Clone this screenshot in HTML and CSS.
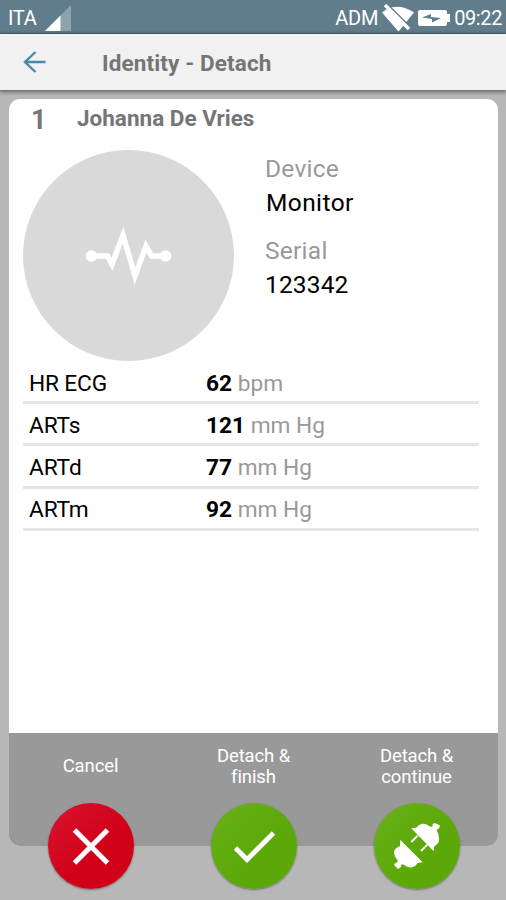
FILE: index.html
```html
<!DOCTYPE html>
<html lang="en">
<head>
<meta charset="utf-8">
<title>Identity - Detach</title>
<link rel="stylesheet" href="styles.css">
</head>
<body>
<div class="statusbar">
  <span class="carrier">ITA</span>
  <svg class="signal" viewBox="0 0 26 26"><path d="M26 0V26H0Z" fill="#8ba3ae"/><path d="M15.500 10.500V26H0Z" fill="#fff"/></svg>
  <span class="user">ADM</span>
  <svg class="wifi" viewBox="0 0 32 28"><path d="M0 8.500L5 5Q18-1 32 8.500L16.500 27.500Z" fill="#fff"/><path d="M6 1L29 24" stroke="#617d8c" stroke-width="1.800"/><path d="M3 1L27 25" stroke="#fff" stroke-width="3.400"/></svg>
  <svg class="battery" viewBox="0 0 32 16"><path d="M2 0H27Q29 0 29 2V4H32V12H29V14Q29 16 27 16H2Q0 16 0 14V2Q0 0 2 0Z" fill="#fff"/><path d="M4 7.500L13 4V7L23 8L14 12.500V9Z" fill="#617d8c"/></svg>
  <span class="clock">09:22</span>
</div>
<header class="appbar">
  <svg class="back" viewBox="0 0 24 24"><path d="M22.500 12H2M12.500 2L2 12L12.500 22" fill="none" stroke="#468aa7" stroke-width="2.400"/></svg>
  <h1 class="title">Identity - Detach</h1>
</header>
<main class="card">
  <div class="patient"><span class="bed">1</span><span class="name">Johanna De Vries</span></div>
  <section class="device">
    <div class="avatar">
      <svg viewBox="0 0 86 60"><path d="M5 30H21.500L26 38.500L37 9L49 50L60 20L65.500 30H80" fill="none" stroke="#fff" stroke-width="5.400" stroke-miterlimit="10"/><circle cx="5.500" cy="30" r="5.800" fill="#fff"/><circle cx="79.500" cy="30" r="5.800" fill="#fff"/></svg>
    </div>
    <dl class="info">
      <dt class="label">Device</dt><dd class="value">Monitor</dd>
      <dt class="label">Serial</dt><dd class="value serial">123342</dd>
    </dl>
  </section>
  <section class="vitals">
    <div class="row"><span>HR ECG</span><span class="reading"><b>62</b> bpm</span></div>
    <div class="row"><span>ARTs</span><span class="reading"><b>121</b> mm Hg</span></div>
    <div class="row"><span>ARTd</span><span class="reading"><b>77</b> mm Hg</span></div>
    <div class="row"><span>ARTm</span><span class="reading"><b>92</b> mm Hg</span></div>
  </section>
  <footer class="actions">
    <div class="action"><span class="caption">Cancel</span>
      <button class="round red" aria-label="Cancel"><svg viewBox="0 0 86 86"><path d="M26.500 27L59.500 60M59.500 27L26.500 60" stroke="#fff" stroke-width="5"/></svg></button></div>
    <div class="action"><span class="caption">Detach &amp;<br>finish</span>
      <button class="round green" aria-label="Detach and finish"><svg viewBox="0 0 86 86"><path d="M24.500 45L36 56.500L62.500 30" fill="none" stroke="#fff" stroke-width="4.800"/></svg></button></div>
    <div class="action"><span class="caption">Detach &amp;<br>continue</span>
      <button class="round green" aria-label="Detach and continue"><svg viewBox="24 24 258 258"><path d="M136 100L151 98Q156 90 166 87Q178 84 188 92L195 96L201 92L199 88L206 84L221 91V97L212 106Q219 116 219 132L218 142Q212 150 204 155L203 169Z" fill="#fff"/><path d="M155 122L136 141M184 149L165 168" stroke="#fff" stroke-width="6"/><path d="M103 135L170 202L155 204Q150 214 138 217Q124 219 115 211L109 207L104 212L106 215L96 222L84 210L86 206L93 202L96 196Q84 185 84 170Q86 160 102 153Z" fill="#fff"/></svg></button></div>
  </footer>
</main>
</body>
</html>
```
FILE: styles.css
```css
* { box-sizing: border-box; }
body {
  margin: 0;
  height: 900px;
  overflow: hidden;
  background: #b7b7b7;
  font-family: Roboto, sans-serif;
  display: flex;
  flex-direction: column;
}
.statusbar {
  height: 34px;
  flex: none;
  display: flex;
  align-items: center;
  padding: 3px 4px 0 8px;
  background: #617d8c;
  border-bottom: 1px solid #4d6c7e;
  color: #fff;
  font-size: 20px;
  line-height: 30px;
}
.carrier { letter-spacing: -0.3px; }
.signal { width: 26px; height: 26px; margin-left: 9px; }
.user { margin-left: auto; letter-spacing: -0.2px; }
.wifi { width: 32px; height: 28px; margin-left: 4px; }
.battery { width: 32px; height: 16px; margin: 0 4px; }
.clock { letter-spacing: -0.4px; }
.appbar {
  height: 56px;
  flex: none;
  display: flex;
  align-items: center;
  padding: 2px 0 0 23px;
  background: #f1f1f1;
  box-shadow: 0 1px 4px 1px rgba(0, 0, 0, 0.45);
}
.back { width: 24px; height: 24px; margin-top: -2px; }
.title { margin: -1px 0 0 55px; font-size: 22.500px; line-height: 30px; font-weight: 700; letter-spacing: 0.13px; color: #757575; }
.card {
  margin: 9px 8px 0 9px;
  height: 747px;
  flex: none;
  display: flex;
  flex-direction: column;
  background: #fff;
  border-radius: 11px;
}
.patient {
  height: 40px;
  display: flex;
  align-items: center;
  padding-left: 22px;
  font-weight: 700;
  color: #757575;
}
.bed { width: 46px; font-size: 27px; margin-top: 1px; }
.name { font-size: 22.500px; margin-top: -2px; }
.device { display: flex; padding: 11px 0 0 14px; height: 223px; }
.avatar {
  width: 211px;
  height: 211px;
  border-radius: 50%;
  background: #d9d9d9;
  display: flex;
  justify-content: center;
  align-items: center;
}
.avatar svg { width: 86px; height: 60px; }
.info { margin: 2px 0 0 31px; font-size: 24.500px; }
.label { line-height: 34px; letter-spacing: 0.25px; color: #999; }
.value { margin: 0 0 14px 1px; line-height: 34px; letter-spacing: 0.4px; color: #000; }
.serial { margin-left: 0; letter-spacing: 0.15px; }
.vitals { margin: 0 19px 0 14px; font-size: 22.700px; }
.row {
  height: 42.200px;
  display: grid;
  grid-template-columns: 177px 1fr;
  align-items: center;
  padding: 3px 0 0 6px;
  border-bottom: 3px solid #e5e5e5;
}
.row > span:first-child { letter-spacing: -0.15px; }
.reading { color: #999; }
.reading b { color: #000; }
.actions {
  height: 113px;
  margin-top: auto;
  display: grid;
  grid-template-columns: repeat(3, 163px);
  background: #999;
  border-radius: 0 0 11px 11px;
}
.action { display: flex; flex-direction: column; align-items: center; }
.caption {
  height: 66px;
  flex: none;
  display: flex;
  align-items: center;
  padding-top: 1px;
  text-align: center;
  color: #fff;
  font-size: 18.500px;
  letter-spacing: -0.1px;
  line-height: 21px;
}
.round {
  width: 86px;
  height: 86px;
  flex: none;
  margin-top: 4px;
  padding: 0;
  border: 0;
  border-radius: 50%;
  box-shadow: 0 1px 2px rgba(0, 0, 0, 0.4);
}
.round svg { display: block; width: 86px; height: 86px; }
.red { background: linear-gradient(135deg, #d91431, #d00018 60%); }
.green { background: linear-gradient(135deg, #69b119, #5ba808 60%); }
```
